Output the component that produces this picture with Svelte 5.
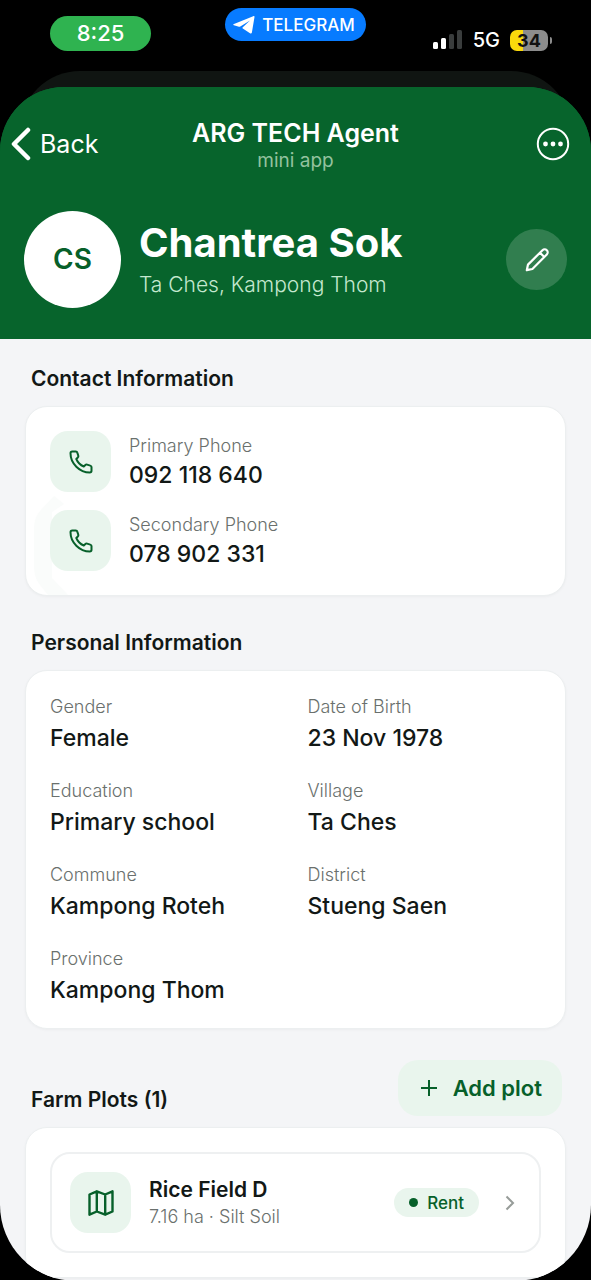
<script>
  const phones = [
    { label: 'Primary Phone', value: '092 118 640' },
    { label: 'Secondary Phone', value: '078 902 331' }
  ];
  const details = [
    ['Gender', 'Female'],
    ['Date of Birth', '23 Nov 1978'],
    ['Education', 'Primary school'],
    ['Village', 'Ta Ches'],
    ['Commune', 'Kampong Roteh'],
    ['District', 'Stueng Saen'],
    ['Province', 'Kampong Thom']
  ];
</script>

<div class="screen">
  <div class="status">
    <span class="time">8:25</span>
    <span class="source">
      <svg width="22" height="18" viewBox="0 0 22 18" aria-hidden="true">
        <path d="M21.500 1 18.900 16.400c-.2 1.100-1 1.400-1.900.8L9.800 12.600c-.5-.4-.5-.9 0-1.400L17 4.600 7.300 10.600c-.5.300-.9.300-1.400.1L.9 9.300c-.9-.3-.9-1 .1-1.400L20.200.2c.9-.3 1.500-.1 1.300.8Z" fill="#fff" />
      </svg>
      TELEGRAM
    </span>
    <div class="signals">
      <svg width="30" height="20" viewBox="0 0 30 20" aria-label="Signal">
        <rect x="0" y="12" width="5" height="7" rx="1.500" fill="#fff" />
        <rect x="8" y="8" width="5" height="11" rx="1.500" fill="#fff" />
        <rect x="16" y="4" width="5" height="15" rx="1.500" fill="#3a3d3d" />
        <rect x="24" y="0" width="5" height="19" rx="1.500" fill="#3a3d3d" />
      </svg>
      <span>5G</span>
      <span class="battery">34</span>
    </div>
  </div>

  <div class="behind"></div>

  <div class="sheet">
    <header>
      <div class="bar">
        <button class="back">
          <svg width="20" height="34" viewBox="0 0 20 34" aria-hidden="true"><path d="M17 3 3 17l14 14" fill="none" stroke="#fff" stroke-width="4.500" stroke-linecap="round" stroke-linejoin="round" /></svg>
          Back
        </button>
        <div class="app">
          <strong>ARG TECH Agent</strong>
          <span>mini app</span>
        </div>
        <button class="more" aria-label="More">
          <svg width="34" height="34" viewBox="0 0 34 34" aria-hidden="true">
            <circle cx="17" cy="17" r="15.200" fill="none" stroke="#fff" stroke-width="2" />
            <g fill="#fff"><circle cx="9.500" cy="17" r="2.400" /><circle cx="17" cy="17" r="2.400" /><circle cx="24.500" cy="17" r="2.400" /></g>
          </svg>
        </button>
      </div>
      <div class="profile">
        <div class="avatar">CS</div>
        <div class="who">
          <h1>Chantrea Sok</h1>
          <p>Ta Ches, Kampong Thom</p>
        </div>
        <button class="edit" aria-label="Edit">
          <svg width="26" height="26" viewBox="0 0 26 26" aria-hidden="true">
            <path d="M2.800 23.200 4 17.600 18.500 3.200a2.900 2.900 0 0 1 4.300 4.300L8.400 22ZM16 5.700l4.300 4.300" fill="none" stroke="#fff" stroke-width="2.200" stroke-linejoin="round" />
          </svg>
        </button>
      </div>
    </header>

    <main>
      <section>
        <h2>Contact Information</h2>
        <div class="card phones">
          <svg class="mark" width="40" height="99" viewBox="0 0 40 99" aria-hidden="true">
            <path d="M20 0 6 15Q0 22 0 32v38q0 12 6 19l8 10h20L18 82V16L30 8Z" fill="#fafcfb" />
          </svg>
          {#each phones as phone}
            <div class="phone">
              <span class="tile">
                <svg width="26" height="26" viewBox="0 0 26 26" aria-hidden="true">
                  <path d="M4.200 2.500h3.600c.7 0 1.300.4 1.500 1.100l1 3.200c.2.600 0 1.300-.5 1.700L8.300 10a14 14 0 0 0 7.500 7.500l1.600-1.500c.4-.5 1.100-.6 1.700-.4l3.200 1c.7.200 1.200.8 1.200 1.500v3.700c0 .9-.7 1.700-1.700 1.700C11.600 23.500 2.500 14.400 2.500 4.200c0-1 .8-1.700 1.700-1.700Z" fill="none" stroke="#07602a" stroke-width="2" stroke-linejoin="round" />
                </svg>
              </span>
              <div class="entry">
                <span class="label">{phone.label}</span>
                <span class="value">{phone.value}</span>
              </div>
            </div>
          {/each}
        </div>
      </section>

      <section>
        <h2>Personal Information</h2>
        <dl class="card details">
          {#each details as [label, value]}
            <div class="entry">
              <dt class="label">{label}</dt>
              <dd class="value">{value}</dd>
            </div>
          {/each}
        </dl>
      </section>

      <section>
        <div class="heading">
          <h2>Farm Plots (1)</h2>
          <button class="add">
            <svg width="18" height="18" viewBox="0 0 18 18" aria-hidden="true"><path d="M9 1v16M1 9h16" stroke="#07602a" stroke-width="2" /></svg>
            Add plot
          </button>
        </div>
        <div class="card plots">
          <button class="plot">
            <span class="tile">
              <svg width="28" height="28" viewBox="0 0 28 28" aria-hidden="true">
                <path d="m2.500 5.500 7.300-3.200 8.400 3.200 7.300-3.200v20.200l-7.300 3.200-8.400-3.200-7.300 3.200ZM9.800 2.300v20.200M18.200 5.500v20.200" fill="none" stroke="#07602a" stroke-width="2.400" stroke-linejoin="round" />
              </svg>
            </span>
            <span class="field">
              <span class="name">Rice Field D</span>
              <span class="sub">7.16 ha · Silt Soil</span>
            </span>
            <span class="tag">Rent</span>
            <svg class="go" width="10" height="16" viewBox="0 0 10 16" aria-hidden="true"><path d="m1.500 1.500 6.500 6.500-6.500 6.500" fill="none" stroke="#979c99" stroke-width="2" /></svg>
          </button>
        </div>
      </section>
    </main>
  </div>
</div>

<style>
  :global(body) {
    background: #000;
  }
  * {
    box-sizing: border-box;
    margin: 0;
  }
  button {
    padding: 0;
    border: 0;
    background: none;
    color: inherit;
    font: inherit;
    text-align: left;
    cursor: pointer;
  }
  svg {
    display: block;
    flex: none;
  }
  .screen {
    min-height: 100vh;
    display: flex;
    flex-direction: column;
    background: #000;
    color: #121816;
    font-family: Inter, sans-serif;
    overflow: hidden;
  }
  .status {
    display: grid;
    grid-template-columns: 1fr auto 1fr;
    align-items: start;
    height: 71px;
    padding: 8px 43px 0;
    color: #fff;
  }
  .time {
    justify-self: start;
    width: 101px;
    margin: 8px 0 0 7px;
    border-radius: 18px;
    background: #2fb350;
    font-size: 22px;
    font-weight: 500;
    line-height: 35px;
    text-align: center;
  }
  .source {
    display: flex;
    align-items: center;
    gap: 7px;
    height: 33px;
    padding: 0 11px 0 8px;
    border-radius: 17px;
    background: #077bff;
    font-size: 17px;
    font-weight: 500;
  }
  .signals {
    justify-self: end;
    display: flex;
    align-items: center;
    gap: 10px;
    margin-top: 18px;
    font-size: 20px;
    font-weight: 500;
    line-height: 28px;
  }
  .battery {
    position: relative;
    width: 38px;
    border-radius: 7px;
    background: linear-gradient(90deg, #fbd90c 34%, #8c8c8c 34%);
    color: #111;
    font-size: 18px;
    font-weight: 700;
    line-height: 21px;
    text-align: center;
  }
  .battery::after {
    content: '';
    position: absolute;
    top: 7px;
    right: -4px;
    width: 2px;
    height: 7px;
    border-radius: 0 2px 2px 0;
    background: #8c8c8c;
  }
  .behind {
    height: 76px;
    margin: 0 20px -60px;
    border-radius: 60px 60px 0 0;
    background: #101512;
  }
  .sheet {
    position: relative;
    flex: 1;
    border-radius: 64px 64px 76px 76px;
    background: linear-gradient(#07642c 100px, #f4f5f7 100px);
    overflow: hidden;
  }
  header {
    padding: 29px 24px 31px;
    background: #07642c;
    color: #fff;
  }
  .bar {
    display: grid;
    grid-template-columns: 1fr auto 1fr;
    align-items: center;
    margin: 0 -3px 0 -13px;
  }
  .back {
    justify-self: start;
    display: flex;
    align-items: center;
    gap: 9px;
    font-size: 25px;
    line-height: 34px;
  }
  .app {
    display: flex;
    flex-direction: column;
    align-items: center;
    margin-left: 10px;
  }
  .app strong {
    font-size: 25px;
    font-weight: 600;
    line-height: 34px;
  }
  .app span {
    color: #93c29f;
    font-size: 19px;
    line-height: 22px;
  }
  .more {
    justify-self: end;
  }
  .profile {
    display: flex;
    align-items: center;
    gap: 18px;
    margin-top: 39px;
  }
  .avatar {
    flex: none;
    width: 97px;
    border-radius: 50%;
    background: #fff;
    color: #07602a;
    font-size: 28px;
    font-weight: 600;
    line-height: 97px;
    text-align: center;
  }
  .who {
    flex: 1;
  }
  h1 {
    font-size: 40px;
    font-weight: 700;
    line-height: 50px;
  }
  .who p {
    color: #c4e8cf;
    font-size: 21px;
    font-weight: 300;
    line-height: 34px;
  }
  .edit {
    display: grid;
    place-items: center;
    width: 61px;
    height: 61px;
    border-radius: 50%;
    background: #317e4f;
  }
  main {
    display: flex;
    flex-direction: column;
    gap: 31px;
    padding: 24px 25px 3px;
  }
  h2 {
    padding-left: 6px;
    font-size: 21px;
    font-weight: 600;
    line-height: 32px;
  }
  .card {
    margin-top: 11px;
    padding: 24px;
    border: 1px solid #eceff0;
    border-radius: 22px;
    background: #fff;
    box-shadow: 0 1px 3px #0000000a;
  }
  .phones {
    position: relative;
    display: flex;
    flex-direction: column;
    gap: 18px;
  }
  .mark {
    position: absolute;
    bottom: 0;
    left: 8px;
  }
  .phone {
    position: relative;
    display: flex;
    align-items: center;
    gap: 18px;
  }
  .tile {
    flex: none;
    display: grid;
    place-items: center;
    width: 61px;
    height: 61px;
    border-radius: 18px;
    background: #e9f5ed;
  }
  .entry {
    display: flex;
    flex-direction: column;
  }
  .label {
    color: #6a706d;
    font-size: 18px;
    font-weight: 300;
    line-height: 26px;
  }
  .value {
    font-size: 23px;
    font-weight: 500;
    line-height: 32px;
  }
  .details {
    display: grid;
    grid-template-columns: 1fr 1fr;
    gap: 24px;
    padding: 23px 24px 22px;
  }
  .details .entry {
    gap: 2px;
  }
  .heading {
    display: flex;
    align-items: flex-end;
    justify-content: space-between;
    padding-right: 4px;
  }
  .add {
    display: flex;
    align-items: center;
    gap: 15px;
    height: 56px;
    padding: 0 20px 0 22px;
    border-radius: 20px;
    background: #e9f5ed;
    color: #07602a;
    font-size: 22px;
    font-weight: 600;
  }
  .plot {
    display: flex;
    align-items: center;
    width: 100%;
    padding: 18px;
    border: 2px solid #eef0f1;
    border-radius: 20px;
  }
  .field {
    flex: 1;
    display: flex;
    flex-direction: column;
    margin-left: 18px;
  }
  .name {
    font-size: 21px;
    font-weight: 600;
    line-height: 28px;
  }
  .sub {
    color: #6a706d;
    font-size: 18px;
    font-weight: 300;
    line-height: 26px;
  }
  .tag {
    display: flex;
    align-items: center;
    gap: 9px;
    height: 29px;
    padding: 0 15px;
    border-radius: 15px;
    background: #e9f5ed;
    color: #07602a;
    font-size: 17px;
    font-weight: 500;
  }
  .tag::before {
    content: '';
    width: 9px;
    height: 9px;
    border-radius: 50%;
    background: #07602a;
  }
  .go {
    margin: 0 6px 0 26px;
  }
</style>
